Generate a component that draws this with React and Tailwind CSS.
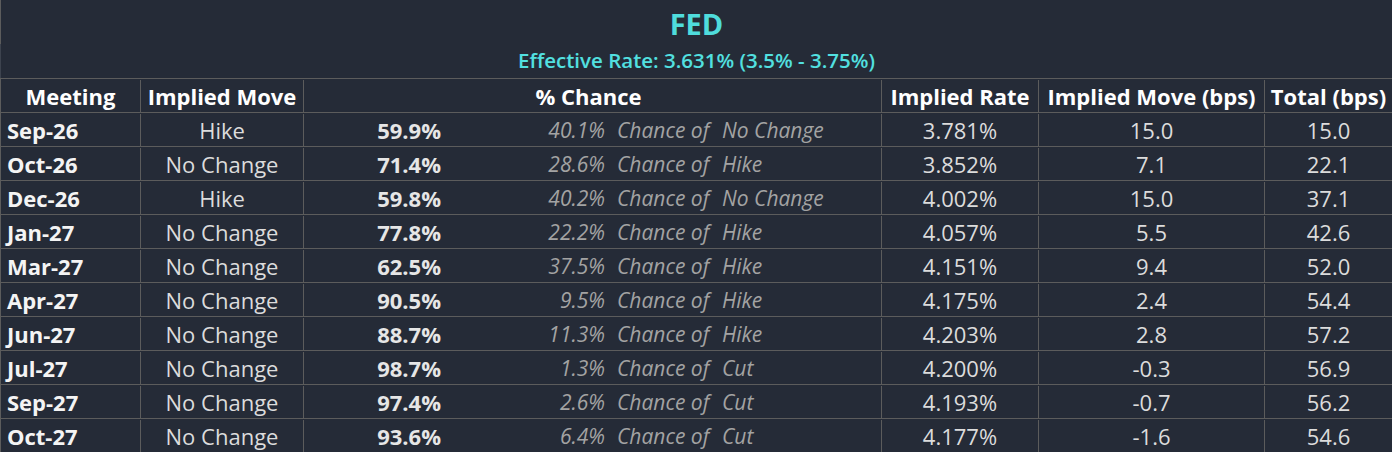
import React from "react";

const rows = [
  ["Sep-26", "Hike", "59.9%", "40.1%", "No Change", "3.781%", "15.0", "15.0"],
  ["Oct-26", "No Change", "71.4%", "28.6%", "Hike", "3.852%", "7.1", "22.1"],
  ["Dec-26", "Hike", "59.8%", "40.2%", "No Change", "4.002%", "15.0", "37.1"],
  ["Jan-27", "No Change", "77.8%", "22.2%", "Hike", "4.057%", "5.5", "42.6"],
  ["Mar-27", "No Change", "62.5%", "37.5%", "Hike", "4.151%", "9.4", "52.0"],
  ["Apr-27", "No Change", "90.5%", "9.5%", "Hike", "4.175%", "2.4", "54.4"],
  ["Jun-27", "No Change", "88.7%", "11.3%", "Hike", "4.203%", "2.8", "57.2"],
  ["Jul-27", "No Change", "98.7%", "1.3%", "Cut", "4.200%", "-0.3", "56.9"],
  ["Sep-27", "No Change", "97.4%", "2.6%", "Cut", "4.193%", "-0.7", "56.2"],
  ["Oct-27", "No Change", "93.6%", "6.4%", "Cut", "4.177%", "-1.6", "54.6"],
];

export default function App() {
  return (
    <div
      className="w-[1392px] h-[452px] overflow-hidden bg-[#252b37] text-[#e3e3e3]"
      style={{ fontFamily: '"Open Sans", "Noto Sans", sans-serif' }}
    >
      {/* Title block */}
      <div className="flex flex-col">
        <div className="h-[44px] border-l border-[#5c5c5c] flex items-center justify-center">
          <span className="text-[29px] font-bold text-[#4fdcdc] leading-none pt-[2px]">FED</span>
        </div>
        <div className="h-[34px] border-l border-[#3d434e] flex items-center justify-center">
          <span className="text-[20.5px] font-semibold text-[#52e0e0] leading-none pb-[2px]">
            Effective Rate: 3.631% (3.5% - 3.75%)
          </span>
        </div>
      </div>

      {/* Header row */}
      <div className="flex h-[34px] border-t border-[#5c5c5c] border-l text-[22px] font-bold text-white leading-[32px] pt-[1px]">
        <div className="w-[140px] border-r border-[#5c5c5c] text-center">Meeting</div>
        <div className="w-[163px] border-r border-[#5c5c5c] text-center whitespace-nowrap">Implied Move</div>
        <div className="w-[578px] border-r border-[#5c5c5c] text-center pr-[8px]">% Chance</div>
        <div className="w-[157px] border-r border-[#5c5c5c] text-center whitespace-nowrap">Implied Rate</div>
        <div className="w-[226px] border-r border-[#5c5c5c] text-center whitespace-nowrap">Implied Move (bps)</div>
        <div className="flex-1 text-center whitespace-nowrap">Total (bps)</div>
      </div>

      {/* Data rows */}
      {rows.map((r) => (
        <div
          key={r[0]}
          className="flex h-[34px] border-t border-[#5c5c5c] border-l text-[22px] leading-[32px] pt-[1px] whitespace-nowrap"
        >
          <div className="w-[140px] border-r border-[#5c5c5c] pl-[6px] font-bold text-[#f4f4f4]">{r[0]}</div>
          <div className="w-[163px] border-r border-[#5c5c5c] text-center text-[#dcdcdc]">{r[1]}</div>
          <div className="w-[578px] border-r border-[#5c5c5c] flex">
            <div className="w-[137px] text-right font-bold text-[#e6e6e6]">{r[2]}</div>
            <div className="w-[164px] text-right italic text-[21px] text-[#a3a3a3]">{r[3]}</div>
            <div className="w-[117px] pl-[12px] italic text-[21px] text-[#a3a3a3]">Chance of</div>
            <div className="flex-1 italic text-[21px] text-[#a3a3a3]">{r[4]}</div>
          </div>
          <div className="w-[157px] border-r border-[#5c5c5c] text-center text-[#dcdcdc]">{r[5]}</div>
          <div className="w-[226px] border-r border-[#5c5c5c] text-center text-[#dcdcdc]">{r[6]}</div>
          <div className="flex-1 text-center text-[#dcdcdc]">{r[7]}</div>
        </div>
      ))}
    </div>
  );
}
